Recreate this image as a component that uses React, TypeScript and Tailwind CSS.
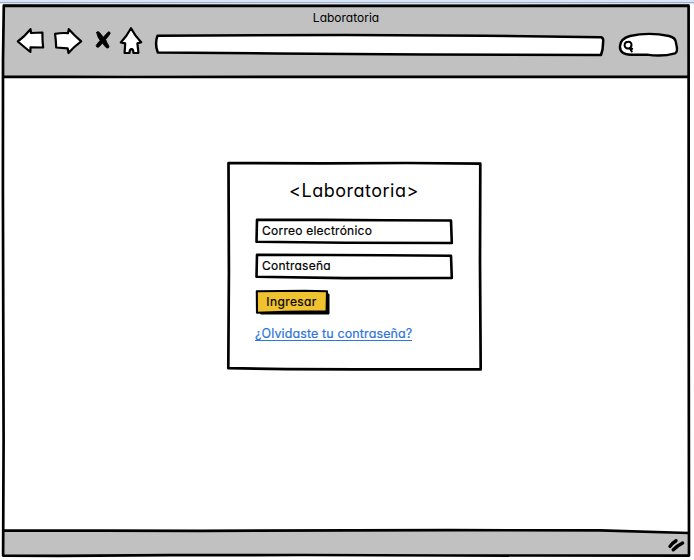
import type { ReactNode } from 'react';

type SketchProps = { w: number; h: number; d: string; fill?: string; stroke?: number };

/* Hand-drawn outline painted behind the content of its parent. */
function Sketch({ w, h, d, fill = 'white', stroke = 2.7 }: SketchProps) {
  return (
    <svg
      className="pointer-events-none absolute left-0 top-0 overflow-visible"
      width={w}
      height={h}
      viewBox={`0 0 ${w} ${h}`}
      aria-hidden="true"
    >
      <path d={d} fill={fill} stroke="black" strokeWidth={stroke} strokeLinejoin="round" strokeLinecap="round" />
    </svg>
  );
}

function NavIcon({ w, h, className, children }: { w: number; h: number; className: string; children: ReactNode }) {
  return (
    <svg
      className={`block shrink-0 overflow-visible ${className}`}
      width={w}
      height={h}
      viewBox={`0 0 ${w} ${h}`}
      fill="white"
      stroke="black"
      strokeWidth="2.2"
      strokeLinejoin="round"
      strokeLinecap="round"
    >
      {children}
    </svg>
  );
}

function Toolbar() {
  return (
    <div className="flex h-7 items-start pl-[13px]">
      <NavIcon w={28} h={26} className="">
        <path d="M1.8 13.5 Q8.5 8.5 14.5 1.2 L15 5 L26.4 4.5 Q26.3 12 27.1 19.5 L14.5 19.4 L14.4 24 Q8 18.8 1.8 13.5Z" />
      </NavIcon>
      <NavIcon w={28} h={26} className="ml-[10px]">
        <path d="M1 5.8 Q8 4.6 14 5.2 L14.8 1.2 Q20.5 7.5 27.2 13.3 Q20 18.5 14.5 25 L13.6 20.3 L2.2 19.5 Q2 12 1 5.8Z" />
      </NavIcon>
      <NavIcon w={16} h={20} className="ml-[13px] mt-[2px]">
        <path d="M1.6 2.6 Q2.5 .5 4.3 2.2 Q7 5.5 8.4 7.2 Q11 3.8 13.4 1.9 Q15.3 1.6 15.2 3.4 Q13.4 6.4 10.6 9.5 Q11.7 12.6 14 16.2 Q14.1 18.6 11.7 18 Q9.4 16 7.5 12.9 Q5.6 15.6 3.5 17.2 Q1 17.6 1.2 15.4 Q2.8 12.8 5.1 10.5 Q2.4 7 1.6 2.6Z" fill="black" strokeWidth=".8" />
      </NavIcon>
      <NavIcon w={24} h={27} className="ml-[8px]">
        <path d="M12 .2 Q16.2 8.3 22.2 14.3 L18.4 15.4 L19.4 24.8 L14.4 25 Q14.5 21.3 12.5 21.2 Q10.5 21.2 10.5 25 L5.6 25 L6.2 15.4 L1.8 14.5 Q7.5 8.5 12 .2Z" />
      </NavIcon>
      <div className="relative ml-[12px] mt-[7px] h-5 w-[449px]">
        <Sketch w={449} h={20} d="M2.5 .7 L190 0 L330 .8 L446 2.2 Q449 2.8 448 8 Q448.2 14 446 20 L270 19.6 L120 18.5 L2.8 17.5 Q-.5 9 2.5 .7Z" stroke={2.5} />
      </div>
      <div className="relative ml-[15px] mt-[5px] h-[23px] w-[59px]">
        <Sketch w={59} h={23} d="M11 3 Q30 -1.3 50 3 Q57 4.4 57.2 11 Q59.3 19 56 20.3 Q43 24 28 21.6 L12 21.8 Q1 21.5 .9 13.5 Q1.3 5.5 11 3Z" stroke={2.4} />
        <svg className="relative ml-[4px] mt-[7px] block overflow-visible" width="12" height="13" viewBox="0 0 12 13" fill="none" stroke="black" strokeWidth="2" strokeLinecap="round">
          <path d="M5.2 1.7 C9.7 1.3 9.4 8.3 5.5 8.4 C.2 8.7 .5 1.8 5.2 1.7Z" />
          <path d="M6.6 8.7 L9.2 8.7 M7.2 8.7 L8.8 11.4" />
        </svg>
      </div>
    </div>
  );
}

function LoginCard() {
  return (
    <div className="relative ml-[227px] mt-[85px] flex h-[208px] w-[254px] flex-col pl-[28px]">
      <Sketch w={254} h={208} d="M1.5 1.1 L95 1.3 L180 1 L253.3 1.7 L253 100 L253.7 207.4 L130 207.4 L60 207.1 L1.3 206.2 L1.9 110Z" />
      <h1 className="relative -ml-[28px] mt-[17px] w-[254px] text-center text-[18px] leading-6 tracking-[0.5px]">&lt;Laboratoria&gt;</h1>
      <div className="relative mt-[16px] flex h-[25px] w-[198px] items-center pl-[7px] text-[12px]">
        <Sketch w={198} h={25} d="M2 .9 L70 .9 L130 1.2 L196 1.5 L196.8 24 L90 23.8 L1.5 22.7Z" stroke={2.6} />
        <span className="relative -top-px tracking-[0.24px] [-webkit-text-stroke:0.2px_black]">Correo electrónico</span>
      </div>
      <div className="relative mt-[10px] flex h-[25px] w-[198px] items-center pl-[7px] text-[12px]">
        <Sketch w={198} h={25} d="M2 .8 L70 1 L130 1.2 L196 1.8 L196.8 23.9 L90 24.1 L1.5 22.7Z" stroke={2.6} />
        <span className="relative -top-px tracking-[0.24px] [-webkit-text-stroke:0.2px_black]">Contraseña</span>
      </div>
      <button className="relative mt-[11px] h-[25px] w-[75px] text-[12px]" type="button">
        <Sketch w={75} h={25} d="M6 5 L74 4 L74 24 L6 24Z" fill="black" stroke={1} />
        <Sketch w={75} h={25} d="M1.8 1.2 L50 .8 L72 1.2 L71.6 21.4 L30 21.7 L2 22.7Z" fill="#f0c230" stroke={2.1} />
        <span className="relative -left-px -top-[1px] tracking-[0.4px] [-webkit-text-stroke:0.2px_black]">Ingresar</span>
      </button>
      <a className="relative mt-[10px] h-[16px] w-[157px] whitespace-nowrap border-b border-[#2878e0] text-[12.5px] leading-[17px] tracking-[0.12px] text-[#2b73dd] [-webkit-text-stroke:0.2px_#2b73dd]" href="#">
        ¿Olvidaste tu contraseña?
      </a>
    </div>
  );
}

export default function App() {
  return (
    <div className="relative flex h-[560px] w-[694px] flex-col overflow-hidden bg-white font-['Inter',sans-serif] text-black [font-feature-settings:'cv11']">
      <div className="h-[4px] shrink-0 border-b border-[#dce5ef] bg-[linear-gradient(#d7e5f4_2px,#9aafcf_2px)]" />
      <div className="mx-[3px] flex h-[73px] w-[686px] shrink-0 flex-col bg-[#c1c1c1] pt-[6px]">
        <div className="h-[18px] text-center text-[12px] leading-4">Laboratoria</div>
        <Toolbar />
      </div>
      <main className="h-[453px] shrink-0">
        <LoginCard />
      </main>
      <footer className="relative mx-[3px] h-[26px] w-[686px] bg-[#c1c1c1]">
        <Sketch w={686} h={26} d="M590 -1 L686 -1 L686 3 L590 1Z" stroke={0} />
        <svg className="ml-auto mr-[3px] mt-[8px] block overflow-visible" width="18" height="14" viewBox="0 0 18 14" stroke="black" strokeWidth="3.4" strokeLinecap="round" fill="none">
          <path d="M2 8.4 Q4.5 4.8 8 2.7 M5.2 11.8 Q9 7.8 14.6 5" />
        </svg>
      </footer>
      <Sketch
        w={694}
        h={560}
        fill="none"
        stroke={2.7}
        d="M3.8 5.7 L350 5.9 L688.6 5.7 L688.7 280 L689 555.6 L450 555.5 L300 555 L170 555.2 L60 555.8 L3.1 555.6 L3.6 440 L2.9 190 L3 60Z M3.5 76.6 L130 77 L390 76.9 L688 76.6 M3.5 530.4 L200 530.8 L450 530.2 L600 530.3 L688.5 533"
      />
    </div>
  );
}
